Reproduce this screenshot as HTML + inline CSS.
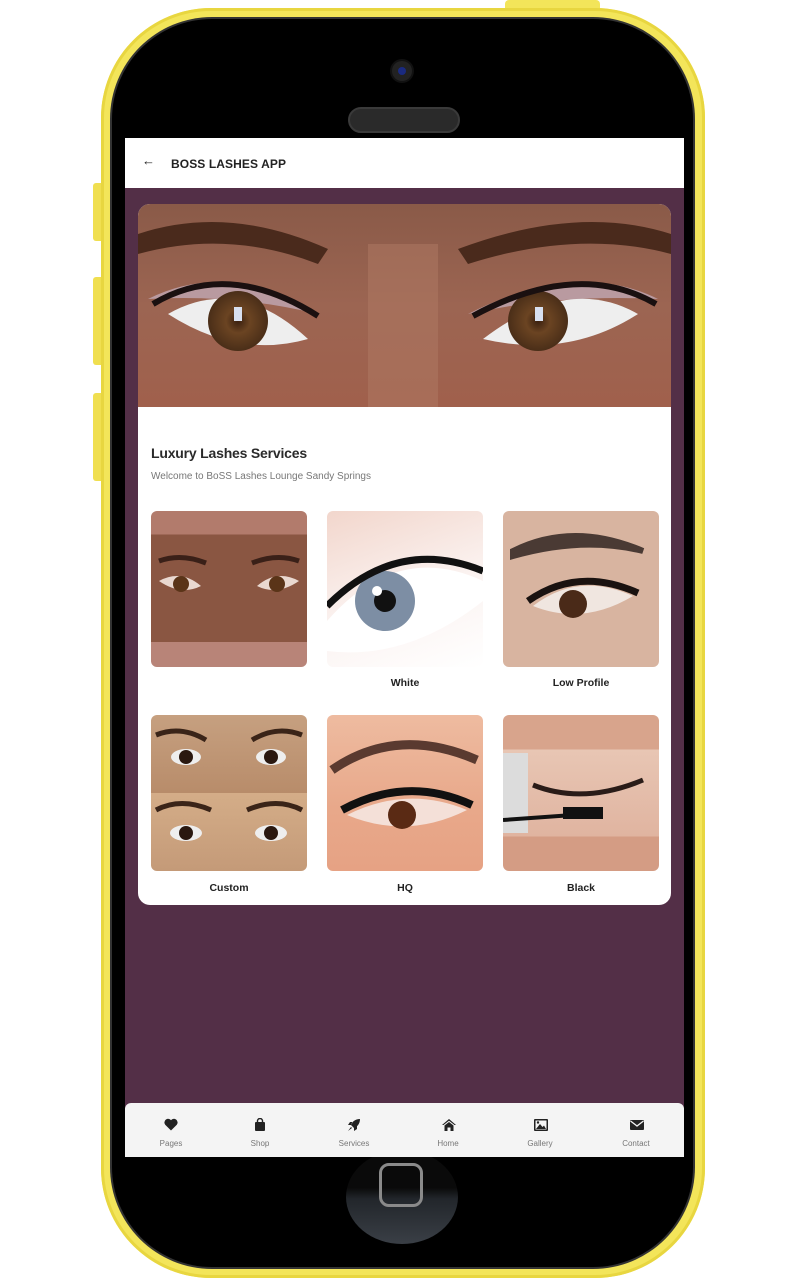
<!DOCTYPE html>
<html><head><meta charset="utf-8">
<style>
*{margin:0;padding:0;box-sizing:border-box}
html,body{width:800px;height:1280px;background:#fff;overflow:hidden;font-family:"Liberation Sans",sans-serif}
.abs{position:absolute}
#shell{left:101px;top:8px;width:604px;height:1270px;border-radius:110px;background:#f3e55a;box-shadow:inset 0 0 0 3px #e8d640}
#btn1{left:505px;top:0;width:95px;height:12px;background:#f3e55a;border-radius:4px}
.side{left:93px;width:12px;background:#f0df50;border-radius:3px}
#inner{left:112px;top:19px;width:581px;height:1248px;border-radius:100px;background:#000;box-shadow:0 0 0 2px #333}
#cam{left:392px;top:61px;width:20px;height:20px;border-radius:50%;background:#222;box-shadow:0 0 0 2px #111}
#cam:after{content:"";position:absolute;left:6px;top:6px;width:8px;height:8px;border-radius:50%;background:#1a2a80}
#spk{left:348px;top:107px;width:112px;height:26px;border-radius:13px;background:#2a2a2a;border:2px solid #3a3a3a}
#screen{left:125px;top:138px;width:559px;height:1019px;background:#532f47;overflow:hidden}
#hdr{left:0;top:0;width:559px;height:50px;background:#fff}
#hdr .t{position:absolute;left:46px;top:19px;font-weight:bold;font-size:12px;color:#222;letter-spacing:.1px}
#hdr .a{position:absolute;left:17px;top:15px;font-size:13px;color:#222}
#card{left:13px;top:66px;width:533px;height:701px;background:#fff;border-radius:12px;overflow:hidden}
#hero{left:0;top:0;width:533px;height:203px}
h1{position:absolute;left:13px;top:241px;font-size:14px;color:#2a2a2a;letter-spacing:-.2px}
.sub{position:absolute;left:13px;top:267px;font-size:10px;color:#777}
.tile{position:absolute;width:156px;height:156px;border-radius:6px;overflow:hidden}
.lbl{position:absolute;width:156px;text-align:center;font-size:10.5px;font-weight:bold;color:#222}
#nav{left:0;top:965px;width:559px;height:54px;background:#f4f4f4;border-radius:6px 6px 0 0}
.ni{position:absolute;top:0;width:90px;text-align:center}
.ni svg{position:absolute;left:38px;top:15px}
.ni span{position:absolute;left:0;top:36px;width:90px;font-size:8px;color:#777}
#home{left:346px;top:1150px;width:112px;height:94px;border-radius:50%;background:linear-gradient(#0a0a0a 40%,#22262b 52%,#3a3f46)}
#hb{left:379px;top:1163px;width:44px;height:44px;border:3px solid #8a8a8a;border-radius:10px}
</style></head><body>
<div class="abs" id="btn1"></div>
<div class="abs side" style="top:183px;height:58px"></div>
<div class="abs side" style="top:277px;height:88px"></div>
<div class="abs side" style="top:393px;height:88px"></div>
<div class="abs" id="shell"></div>
<div class="abs" id="inner"></div>
<div class="abs" id="cam"></div>
<div class="abs" id="spk"></div>
<div class="abs" id="home"></div>
<div class="abs" id="hb"></div>
<div class="abs" id="screen">
  <div class="abs" id="hdr"><span class="a">←</span><span class="t">BOSS LASHES APP</span></div>
  <div class="abs" id="card">
    <svg class="abs" id="hero" width="533" height="203" viewBox="0 0 533 203">
      <defs>
        <linearGradient id="sk" x1="0" y1="0" x2="0" y2="1"><stop offset="0" stop-color="#8a5a48"/><stop offset=".5" stop-color="#9c6552"/><stop offset="1" stop-color="#a0604c"/></linearGradient>
        <radialGradient id="ir"><stop offset="0" stop-color="#3a2010"/><stop offset=".4" stop-color="#6b4422"/><stop offset="1" stop-color="#4a2e18"/></radialGradient>
      </defs>
      <rect width="533" height="203" fill="url(#sk)"/>
      <rect x="230" y="40" width="70" height="163" fill="#b07a64" opacity=".5"/>
      <path d="M0 30 Q90 0 190 45 L180 60 Q90 25 0 50Z" fill="#4a2a1c"/>
      <path d="M533 30 Q440 0 320 45 L330 60 Q440 25 533 50Z" fill="#4a2a1c"/>
      <path d="M10 95 Q90 55 180 110 Q100 90 10 95Z" fill="#b99aa0"/>
      <path d="M520 95 Q440 55 330 110 Q420 90 520 95Z" fill="#b99aa0"/>
      <path d="M30 110 Q100 70 170 135 Q100 155 30 110Z" fill="#eee"/>
      <path d="M500 110 Q430 70 345 135 Q430 155 500 110Z" fill="#eee"/>
      <circle cx="100" cy="117" r="30" fill="url(#ir)"/>
      <circle cx="400" cy="117" r="30" fill="url(#ir)"/>
      <rect x="96" y="103" width="8" height="14" fill="#d8e0f0"/>
      <rect x="397" y="103" width="8" height="14" fill="#d8e0f0"/>
      <path d="M15 100 Q90 55 180 112" stroke="#1a1010" stroke-width="6" fill="none"/>
      <path d="M518 100 Q440 55 335 112" stroke="#1a1010" stroke-width="6" fill="none"/>
    </svg>
    <h1>Luxury Lashes Services</h1>
    <div class="sub">Welcome to BoSS Lashes Lounge Sandy Springs</div>
    <div class="tile" style="left:13px;top:307px;background:linear-gradient(#b27b6c 0,#b27b6c 15%,#8a5642 15%,#8a5642 84%,#b88478 84%)">
      <svg width="156" height="156"><path d="M8 70 Q30 58 50 75 Q30 85 8 70Z M148 70 Q126 58 106 75 Q126 85 148 70Z" fill="#e9d8d0"/><circle cx="30" cy="73" r="8" fill="#5a3418"/><circle cx="126" cy="73" r="8" fill="#5a3418"/><path d="M8 50 Q30 42 55 52 M148 50 Q126 42 101 52" stroke="#3a2018" stroke-width="5" fill="none"/></svg>
    </div>
    <div class="tile" style="left:189px;top:307px;background:linear-gradient(160deg,#f2d6cc,#fbf3f1 55%,#fff)">
      <svg width="156" height="156"><path d="M0 110 Q70 30 156 70 L156 90 Q80 150 0 140Z" fill="#fff"/><circle cx="58" cy="90" r="30" fill="#7d8ea4"/><circle cx="58" cy="90" r="11" fill="#111"/><circle cx="50" cy="80" r="5" fill="#fff"/><path d="M0 95 Q70 25 156 60" stroke="#111" stroke-width="7" fill="none"/></svg>
    </div>
    <div class="tile" style="left:365px;top:307px;background:#d8b4a0">
      <svg width="156" height="156"><path d="M10 40 Q70 10 140 40 Q80 25 10 45Z" fill="#4a3a34" stroke="#4a3a34" stroke-width="6"/><path d="M30 95 Q75 60 130 85 Q80 115 30 95Z" fill="#f0e6e0"/><circle cx="70" cy="93" r="14" fill="#4a2a18"/><path d="M25 90 Q75 55 135 82" stroke="#1a1210" stroke-width="7" fill="none"/></svg>
    </div>
    <div class="lbl" style="left:189px;top:473px">White</div>
    <div class="lbl" style="left:365px;top:473px">Low Profile</div>
    <div class="tile" style="left:13px;top:511px;background:linear-gradient(#c6a080,#b88c6a 50%,#d4ad88 50%,#c49a78)">
      <svg width="156" height="156"><path d="M5 20 Q30 10 55 25 M151 20 Q126 10 101 25 M5 95 Q30 82 60 95 M151 95 Q126 82 96 95" stroke="#3a2418" stroke-width="5" fill="none"/><ellipse cx="35" cy="42" rx="15" ry="8" fill="#eee"/><ellipse cx="120" cy="42" rx="15" ry="8" fill="#eee"/><circle cx="35" cy="42" r="7" fill="#2a1810"/><circle cx="120" cy="42" r="7" fill="#2a1810"/><ellipse cx="35" cy="118" rx="16" ry="8" fill="#eee"/><ellipse cx="120" cy="118" rx="16" ry="8" fill="#eee"/><circle cx="35" cy="118" r="7" fill="#2a1810"/><circle cx="120" cy="118" r="7" fill="#2a1810"/></svg>
    </div>
    <div class="tile" style="left:189px;top:511px;background:linear-gradient(#eebba0,#e8a88a 60%,#e6a284)">
      <svg width="156" height="156"><path d="M5 55 Q70 10 150 45" stroke="#5a3a30" stroke-width="9" fill="none"/><path d="M20 100 Q80 70 140 95 Q80 125 20 100Z" fill="#f4e0d8"/><circle cx="75" cy="100" r="14" fill="#5a2a14"/><path d="M15 95 Q80 60 145 90" stroke="#111" stroke-width="8" fill="none"/></svg>
    </div>
    <div class="tile" style="left:365px;top:511px;background:linear-gradient(#d8a48c 0,#d8a48c 22%,#e8c6b4 22%,#e0b4a0 78%,#d49c84 78%)">
      <svg width="156" height="156"><path d="M30 70 Q80 90 140 65" stroke="#2a1c18" stroke-width="5" fill="none"/><rect x="0" y="38" width="25" height="80" fill="#dcdcdc"/><path d="M0 105 L70 100" stroke="#111" stroke-width="4"/><rect x="60" y="92" width="40" height="12" fill="#111"/></svg>
    </div>
    <div class="lbl" style="left:13px;top:678px">Custom</div>
    <div class="lbl" style="left:189px;top:678px">HQ</div>
    <div class="lbl" style="left:365px;top:678px">Black</div>
  </div>
  <div class="abs" id="nav">
    <div class="ni" style="left:1px"><svg width="14" height="13" viewBox="0 0 14 13"><path d="M7 12.5 L1.2 6.8 A3.4 3.4 0 0 1 7 2.2 A3.4 3.4 0 0 1 12.8 6.8Z" fill="#222"/></svg><span>Pages</span></div>
    <div class="ni" style="left:90px"><svg width="14" height="14" viewBox="0 0 14 14"><rect x="2" y="4" width="10" height="9" rx="1" fill="#222"/><path d="M4.5 5 V3 a2.5 2.5 0 0 1 5 0 V5" stroke="#222" stroke-width="1.4" fill="none"/></svg><span>Shop</span></div>
    <div class="ni" style="left:184px"><svg width="14" height="14" viewBox="0 0 14 14"><path d="M13 1 C8 1 5 4 4 7 L7 10 C10 9 13 6 13 1Z M4 7 L1 7 L3 4 L6 4Z M7 10 L7 13 L10 11 L10 8Z M4 9 L1 13 L5 10Z" fill="#222"/></svg><span>Services</span></div>
    <div class="ni" style="left:278px"><svg width="16" height="14" viewBox="0 0 16 14"><path d="M8 1 L1 7 L2.5 7 L8 2.8 L13.5 7 L15 7Z M3.5 7.5 L8 4 L12.5 7.5 V13 H9.5 V9.5 H6.5 V13 H3.5Z" fill="#222"/></svg><span>Home</span></div>
    <div class="ni" style="left:370px"><svg width="16" height="14" viewBox="0 0 16 14"><rect x="1" y="1" width="14" height="12" rx="1" fill="#222"/><rect x="2.5" y="2.5" width="11" height="9" fill="#f4f4f4"/><path d="M3 11 L7 6 L9.5 9 L11 7.5 L13 11Z" fill="#222"/><circle cx="5" cy="4.5" r="1.2" fill="#222"/></svg><span>Gallery</span></div>
    <div class="ni" style="left:466px"><svg width="16" height="14" viewBox="0 0 16 14"><rect x="1" y="2" width="14" height="10" rx="1" fill="#222"/><path d="M1.5 3 L8 8 L14.5 3" stroke="#f4f4f4" stroke-width="1.3" fill="none"/></svg><span>Contact</span></div>
  </div>
</div>
</body></html>
